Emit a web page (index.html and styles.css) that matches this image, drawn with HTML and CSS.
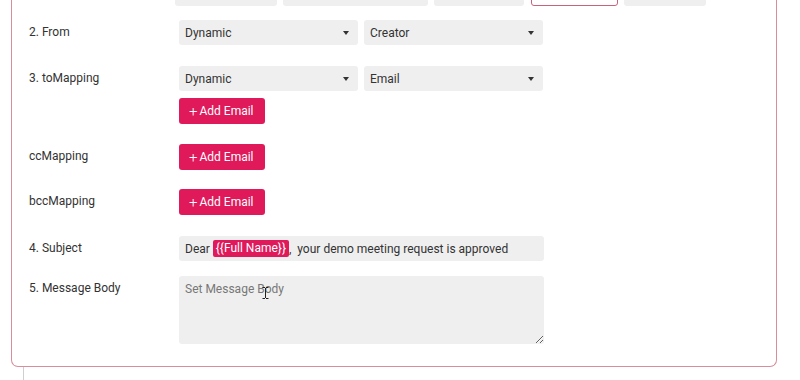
FILE: index.html
```html
<!DOCTYPE html>
<html lang="en">
<head>
<meta charset="UTF-8">
<meta name="viewport" content="width=device-width, initial-scale=1.0">
<title>Email Action</title>
<link rel="stylesheet" href="styles.css">
</head>
<body>
<div class="action-card">
    <div class="type-tabs">
        <div class="type-tab tab-1"></div>
        <div class="type-tab tab-2"></div>
        <div class="type-tab tab-3"></div>
        <div class="type-tab tab-4 active"></div>
        <div class="type-tab tab-5"></div>
    </div>

    <div class="form-row wide">
        <label class="form-label">2. From</label>
        <div class="form-fields">
            <div class="select-pair">
                <div class="select-box">Dynamic<span class="caret"></span></div>
                <div class="select-box">Creator<span class="caret"></span></div>
            </div>
        </div>
    </div>

    <div class="form-row">
        <label class="form-label">3. toMapping</label>
        <div class="form-fields">
            <div class="select-pair">
                <div class="select-box">Dynamic<span class="caret"></span></div>
                <div class="select-box">Email<span class="caret"></span></div>
            </div>
            <button class="add-btn"><span class="plus">+</span>Add Email</button>
        </div>
    </div>

    <div class="form-row narrow">
        <label class="form-label">ccMapping</label>
        <div class="form-fields">
            <button class="add-btn"><span class="plus">+</span>Add Email</button>
        </div>
    </div>

    <div class="form-row wide">
        <label class="form-label">bccMapping</label>
        <div class="form-fields">
            <button class="add-btn"><span class="plus">+</span>Add Email</button>
        </div>
    </div>

    <div class="form-row tight">
        <label class="form-label">4. Subject</label>
        <div class="form-fields">
            <div class="subject-input">Dear <span class="token">{{Full Name}}</span>,  your demo meeting request is approved</div>
        </div>
    </div>

    <div class="form-row">
        <label class="form-label">5. Message Body</label>
        <div class="form-fields">
            <div class="body-wrap">
                <textarea class="body-input" placeholder="Set Message Body"></textarea>
                <svg class="text-cursor" width="7" height="12" viewBox="0 0 7 12">
                    <path d="M0.5 0.5h2.5M4 0.5h2.5M3.5 1v10M0.5 11.5h2.5M4 11.5h2.5" stroke="#222" stroke-width="1" fill="none"/>
                </svg>
            </div>
        </div>
    </div>
</div>
<div class="tree-line"></div>
</body>
</html>
```

FILE: styles.css
```css
body {
    margin: 0;
    padding: 0;
    font-family: "Roboto", "Liberation Sans", sans-serif;
    font-size: 12px;
    color: #333;
    background: #fff;
    overflow: hidden;
}

.action-card {
    width: 766px;
    margin: -20px 0 0 11px;
    padding: 0 16px 22px 17px;
    box-sizing: border-box;
    border: 1px solid #d98c9b;
    border-top: none;
    border-radius: 0 0 7px 7px;
}

.type-tabs {
    display: flex;
    gap: 6px;
    padding-left: 146px;
    margin-bottom: 14px;
}

.type-tab {
    height: 26px;
    background: #efefef;
    border-radius: 3px;
}

.tab-1 { width: 102px; }
.tab-2 { width: 145px; }
.tab-3 { width: 90px; margin-right: 1px; }
.tab-4 { width: 87px; }
.tab-5 { width: 82px; }

.type-tab.active {
    background: #fff;
    border: 1px solid #c9627c;
    box-sizing: border-box;
}

.form-row {
    display: flex;
    align-items: flex-start;
    margin-bottom: 20px;
}

.form-row.wide {
    margin-bottom: 21px;
}

.form-row.narrow {
    margin-bottom: 19px;
}

.form-row.tight {
    margin-bottom: 15px;
}

.form-row:last-child {
    margin-bottom: 0;
}

.form-label {
    width: 150px;
    flex-shrink: 0;
    line-height: 25px;
    color: #333;
}

.form-fields {
    display: flex;
    flex-direction: column;
    align-items: flex-start;
    gap: 7px;
}

.select-pair {
    display: flex;
    gap: 6px;
}

.select-box {
    width: 179px;
    height: 25px;
    padding: 0 9px 0 6px;
    box-sizing: border-box;
    display: flex;
    align-items: center;
    justify-content: space-between;
    background: #efefef;
    border-radius: 3px;
    color: #333;
}

.caret {
    width: 0;
    height: 0;
    border-left: 3.5px solid transparent;
    border-right: 3.5px solid transparent;
    border-top: 4px solid #333;
}

.add-btn {
    height: 26px;
    padding: 0 11px 0 10px;
    display: flex;
    align-items: center;
    border: none;
    border-radius: 3px;
    background: #e0195b;
    color: #fff;
    font-family: inherit;
    font-size: 12px;
    cursor: pointer;
}

.add-btn .plus {
    font-size: 15px;
    font-weight: 300;
    margin-right: 2px;
    line-height: 1;
}

.subject-input {
    width: 365px;
    height: 25px;
    padding: 0 6px;
    box-sizing: border-box;
    display: flex;
    align-items: center;
    white-space: pre;
    background: #efefef;
    border-radius: 3px;
    color: #333;
}

.token {
    display: inline-block;
    padding: 1px 3px;
    line-height: 15px;
    background: #e0195b;
    color: #fff;
    border-radius: 2px;
}

.body-wrap {
    position: relative;
}

.body-input {
    display: block;
    width: 365px;
    height: 68px;
    padding: 6px 6px;
    box-sizing: border-box;
    border: none;
    border-radius: 3px;
    background: #efefef;
    font-family: inherit;
    font-size: 12px;
    color: #333;
    resize: vertical;
    outline: none;
}

.body-input::placeholder {
    color: #777;
}

.text-cursor {
    position: absolute;
    left: 83px;
    top: 11px;
}

.tree-line {
    width: 1px;
    height: 20px;
    margin-left: 23px;
    background: #cfcfcf;
}
```
